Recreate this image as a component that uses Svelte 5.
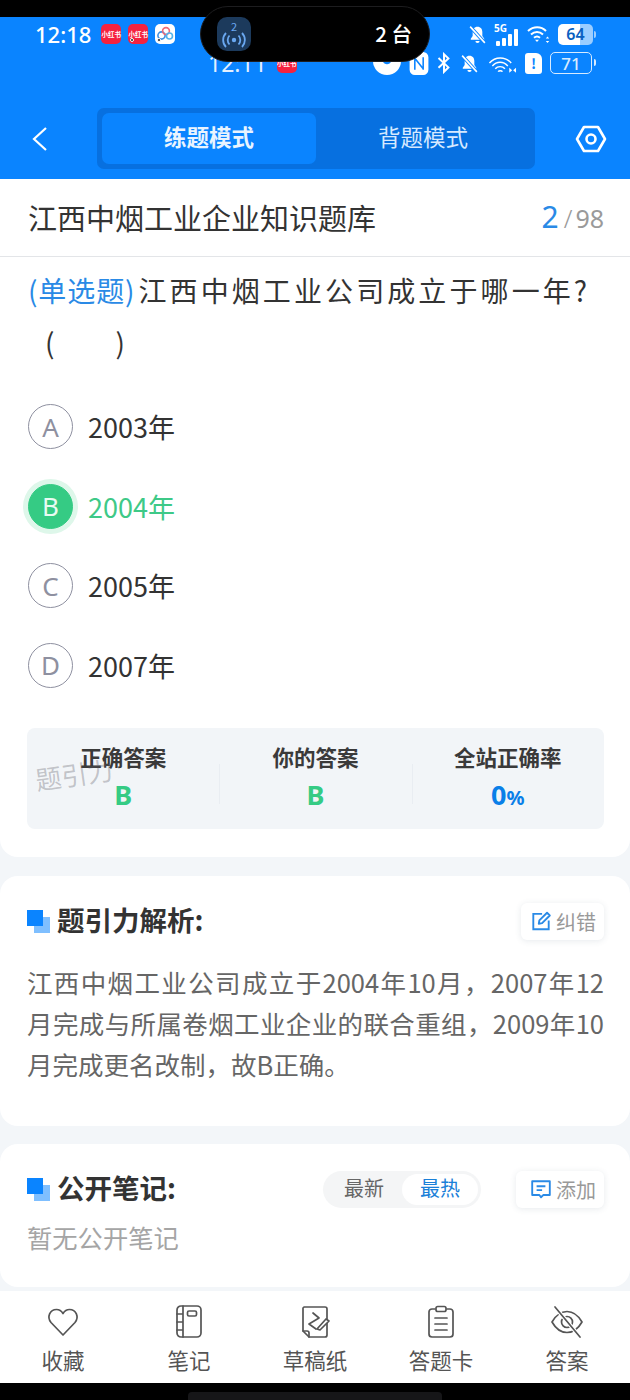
<script>
	const options = [
		{ key: 'A', text: '2003年' },
		{ key: 'B', text: '2004年', picked: true },
		{ key: 'C', text: '2005年' },
		{ key: 'D', text: '2007年' }
	];
	const tabs = ['收藏', '笔记', '草稿纸', '答题卡', '答案'];
</script>

<div class="phone">
	<div class="notch-strip"></div>

	<header class="top">
		<div class="status">
			<span class="clock">12:18</span>
			<span class="app-icon red">小红书</span>
			<span class="app-icon red">小红书<i class="dot"></i></span>
			<span class="app-icon pale">
				<svg viewBox="0 0 20 20" width="20" height="20" fill="none" stroke-width="1.6">
					<circle cx="6.5" cy="11.5" r="3.6" stroke="#3f8fe0" />
					<circle cx="11" cy="7" r="3.4" stroke="#ee6a78" />
					<circle cx="14.5" cy="12" r="3" stroke="#56b4ea" />
				</svg>
				<i class="dot"></i>
			</span>
			<span class="status-right">
				<svg viewBox="0 0 20 20" width="21" height="21" fill="#fff">
					<path d="M10 2.5c-3 0-4.6 2.2-4.6 5v4L3.600 14v1h12.800v-1l-1.800-2.500v-4c0-2.800-1.600-5-4.600-5zM8 16.200h4a2 2 0 0 1-4 0z" />
					<path d="M3 2.500 17 18" stroke="#0a84ff" stroke-width="3.400" />
					<path d="M3 2.500 17 18" stroke="#fff" stroke-width="1.500" />
				</svg>
				<span class="signal">
					<span class="five-g">5G</span>
					<span class="bars"><i style="height:5px"></i><i style="height:8px"></i><i style="height:12px"></i><i style="height:17px"></i></span>
				</span>
				<svg viewBox="0 0 26 20" width="26" height="20" fill="none" stroke="#fff" stroke-width="2">
					<path d="M2 7c5.500-5 13-5 18 0M5 10.500c3.500-3.200 8.500-3.200 12 0M8 13.800c2-1.700 4-1.700 6 0" />
					<path d="M11 18l-2-2.200h4z" fill="#fff" stroke="none" />
					<path d="M21.500 12.500l-1.700 2h3.400zM21.500 19l-1.700-2h3.400z" fill="#fff" stroke="none" />
				</svg>
				<span class="battery-filled"><b>64</b><i></i></span>
			</span>
		</div>

		<div class="status second">
			<span class="clock dim">12:11</span>
			<span class="app-icon red small">小红书</span>
			<span class="status-right lower">
				<span class="half-disc"></span>
				<svg viewBox="0 0 18 22" width="20" height="23" fill="none" stroke="#fff" stroke-width="2">
					<rect x="1" y="1" width="16" height="20" rx="4" fill="#fff" />
					<path d="M5 5v12M5 6l8 10M13 5v12" stroke="#0a84ff" stroke-width="1.500" />
				</svg>
				<svg viewBox="0 0 12 20" width="14" height="22" fill="none" stroke="#fff" stroke-width="1.800">
					<path d="M1 5.500l9 8.500-4 4V2l4 3.800-9 8.500" />
				</svg>
				<svg viewBox="0 0 20 20" width="21" height="21" fill="#fff">
					<path d="M10 2.500c-3 0-4.600 2.200-4.600 5v4L3.600 14v1h12.800v-1l-1.800-2.500v-4c0-2.800-1.600-5-4.600-5zM8 16.200h4a2 2 0 0 1-4 0z" />
					<path d="M3 2.500 17 18" stroke="#0a84ff" stroke-width="3.400" />
					<path d="M3 2.500 17 18" stroke="#fff" stroke-width="1.500" />
				</svg>
				<svg viewBox="0 0 30 20" width="29" height="20" fill="none" stroke="#fff" stroke-width="1.500">
					<path d="M1.500 10C7.500 3 18 3 24 10M4.500 13c4.500-5 11.500-5 16 0M7.500 16c2.500-3 7.500-3 10 0M10.500 19c1-1.400 3.500-1.400 4.500 0" />
					<path d="M22 15l3 2.500-3 2.500zM29 15l-3 2.500 3 2.500z" fill="#fff" stroke="none" />
				</svg>
				<span class="sim">!</span>
				<span class="battery-outline"><b>71</b></span>
			</span>
		</div>

		<nav class="mode-bar">
			<svg class="back" viewBox="0 0 18 28" width="18" height="28" fill="none" stroke="#fff" stroke-width="2.200">
				<path d="M15 3 3 14l12 11" />
			</svg>
			<div class="modes">
				<span class="mode active">练题模式</span>
				<span class="mode">背题模式</span>
			</div>
			<svg class="gear" viewBox="0 0 32 30" width="32" height="30" fill="none" stroke="#fff" stroke-width="2.600">
				<path d="M9 3h14l7 12-7 12H9L2 15z" stroke-linejoin="round" />
				<circle cx="16" cy="15" r="4.500" />
			</svg>
		</nav>
	</header>

	<!-- 投屏胶囊盖在状态栏上 -->
	<div class="island">
		<span class="cast">
			<small>2</small>
			<svg viewBox="0 0 26 16" width="26" height="16" fill="none" stroke="#6aa8f0" stroke-width="1.800">
				<circle cx="13" cy="8" r="2.200" fill="#6aa8f0" stroke="none" />
				<path d="M8.500 3.500a6.500 6.500 0 0 0 0 9M17.500 3.500a6.500 6.500 0 0 1 0 9M5 1a10 10 0 0 0 0 14M21 1a10 10 0 0 1 0 14" />
			</svg>
		</span>
		<span class="cast-count">2 台</span>
	</div>

	<main class="page">
		<section class="question-card">
			<div class="bank">
				<h1>江西中烟工业企业知识题库</h1>
				<span class="progress"><em>2</em><span class="slash">/</span>98</span>
			</div>

			<p class="stem"><span class="type">(单选题)</span>江西中烟工业公司成立于哪一年?<br /><span class="paren">(</span><span class="paren close">)</span></p>

			<ul class="options">
				{#each options as opt}
					<li class:picked={opt.picked}>
						<span class="letter">{opt.key}</span>
						<span>{opt.text}</span>
					</li>
				{/each}
			</ul>

			<div class="summary">
				<div class="cell">
					<h3>正确答案</h3>
					<strong class="green">B</strong>
				</div>
				<div class="cell">
					<h3>你的答案</h3>
					<strong class="green">B</strong>
				</div>
				<div class="cell">
					<h3>全站正确率</h3>
					<strong class="blue">0<small>%</small></strong>
				</div>
				<span class="watermark">题引力</span>
			</div>
		</section>

		<section class="card analysis">
			<div class="card-head">
				<span class="mark"></span>
				<h2>题引力解析:</h2>
				<span class="chip">
					<svg viewBox="0 0 20 20" width="22" height="22" fill="none" stroke="#2a8ae6" stroke-width="1.700">
						<path d="M11 3.500H3v14h14V9.500" />
						<path d="M8 12.500l.5-3L15.500 2.500l2.500 2.500-7 7z" stroke-linejoin="round" />
					</svg>
					纠错
				</span>
			</div>
			<p class="explain">江西中烟工业公司成立于2004年10月，2007年12月完成与所属卷烟工业企业的联合重组，2009年10月完成更名改制，故B正确。</p>
		</section>

		<section class="card notes">
			<div class="card-head">
				<span class="mark"></span>
				<h2>公开笔记:</h2>
				<span class="sort"><span>最新</span><span class="on">最热</span></span>
				<span class="chip wide">
					<svg viewBox="0 0 20 20" width="22" height="22" fill="none" stroke="#2a8ae6" stroke-width="1.700">
						<path d="M2 3h16v12.500h-6l-2 2-1.500-2H2z" stroke-linejoin="round" />
						<path d="M6 7.500h8M6 11h5" />
					</svg>
					添加
				</span>
			</div>
			<p class="empty">暂无公开笔记</p>
		</section>
	</main>

	<footer class="tabs">
		{#each tabs as tab, i}
			<div class="tab">
				<svg viewBox="0 0 36 36" width="36" height="36" fill="none" stroke="#555" stroke-width="1.700" stroke-linejoin="round" stroke-linecap="round">
					{#if i === 0}
						<path d="M18 31 6 18.500C1.500 13 5 5.500 11.500 5.500c3 0 5 1.500 6.500 4 1.500-2.500 3.500-4 6.500-4C31 5.500 34.500 13 30 18.500z" />
					{:else if i === 1}
						<rect x="6" y="2" width="24" height="31" rx="4" />
						<path d="M12 2v31M6 10h6M6 18h6M6 26h6" />
						<rect x="16.500" y="7" width="9" height="5" rx="1.500" />
					{:else if i === 2}
						<path d="M7 3h21a2 2 0 0 1 2 2v26a2 2 0 0 1-2 2H12l-6-6V4z" />
						<path d="M6 27h4a2 2 0 0 1 2 2v4" />
						<path d="M16 9l6 5-10 6 7 5" />
						<path d="M20 25l9-10 3 2-9 9z" fill="#fff" />
					{:else if i === 3}
						<path d="M12 5H9a3 3 0 0 0-3 3v22a3 3 0 0 0 3 3h18a3 3 0 0 0 3-3V8a3 3 0 0 0-3-3h-3" />
						<rect x="13" y="2.500" width="10" height="5" rx="1.800" />
						<path d="M12 14h12M12 20h12M12 26h12" />
					{:else}
						<path d="M3 18c4-7 9-10.500 15-10.500S29 11 33 18c-4 7-9 10.500-15 10.500S7 25 3 18z" />
						<circle cx="18" cy="18" r="5.500" />
						<path d="M6 3l25 30" stroke="#fff" stroke-width="4" />
						<path d="M6 3l25 30" />
					{/if}
				</svg>
				<span>{tab}</span>
			</div>
		{/each}
	</footer>

	<div class="nav-strip"><span class="home-bar"></span></div>
</div>

<style>
	:global(body) {
		margin: 0;
		background: #f3f6f9;
	}

	.phone {
		position: relative;
		width: 630px;
		height: 1400px;
		display: flex;
		flex-direction: column;
		overflow: hidden;
		font-family: "Noto Sans CJK SC", "Noto Sans", sans-serif;
		color: #333;
	}

	.notch-strip {
		height: 17px;
		background: #000;
	}

	.top {
		height: 162px;
		background: #0a84ff;
		color: #fff;
		display: flex;
		flex-direction: column;
	}

	.status {
		display: flex;
		align-items: center;
		height: 34px;
		padding: 0 35px;
		gap: 7px;
	}

	.clock {
		font-family: "Noto Sans", sans-serif;
		font-size: 22px;
		font-weight: 500;
		margin-right: 3px;
		line-height: 1;
	}

	.app-icon {
		position: relative;
		width: 20px;
		height: 20px;
		border-radius: 5px;
		display: flex;
		align-items: center;
		justify-content: center;
		font-size: 6.500px;
		font-weight: 700;
		color: #fff;
		white-space: nowrap;
	}

	.dot {
		position: absolute;
		left: 2px;
		bottom: 2px;
		width: 4px;
		height: 4px;
		border-radius: 50%;
		background: #111;
		border: 1px solid #fff;
		box-sizing: border-box;
	}

	.red {
		background: #f5223f;
	}

	.pale {
		background: #fff;
	}

	.status-right {
		margin-left: auto;
		display: flex;
		align-items: center;
		gap: 6px;
	}

	.signal {
		position: relative;
		width: 26px;
		height: 23px;
	}

	.five-g {
		position: absolute;
		left: 0;
		top: 0;
		font-family: "Noto Sans", sans-serif;
		font-size: 10px;
		font-weight: 700;
		line-height: 1;
	}

	.bars {
		position: absolute;
		left: 2px;
		bottom: 0;
		display: flex;
		align-items: flex-end;
		gap: 2px;
	}

	.bars i {
		width: 4px;
		background: #fff;
		border-radius: 1px;
	}

	.battery-filled {
		position: relative;
		width: 35px;
		height: 21px;
		border-radius: 5px;
		background: linear-gradient(90deg, #fff 62%, #9bcdff 62%);
		display: flex;
		align-items: center;
		justify-content: center;
		margin-right: 2px;
	}

	.battery-filled b {
		font-family: "Noto Sans", sans-serif;
		font-size: 16px;
		font-weight: 600;
		color: #0a5fc0;
		line-height: 1;
	}

	.battery-filled i {
		position: absolute;
		right: -3px;
		top: 7px;
		width: 2px;
		height: 7px;
		border-radius: 0 2px 2px 0;
		background: #9bcdff;
	}

	.second {
		height: 24px;
		padding: 0 38px 0 208px;
		gap: 7px;
	}

	.dim {
		font-size: 23px;
		font-weight: 400;
		color: #e3f0ff;
	}

	.lower {
		gap: 8px;
	}

	.half-disc {
		width: 28px;
		height: 17px;
		margin-top: 7px;
		border-radius: 0 0 14px 14px;
		background: radial-gradient(circle at 50% 10%, #0a84ff 4px, #fff 5px);
	}

	.sim {
		width: 17px;
		height: 21px;
		border-radius: 3px 6px 3px 3px;
		background: #fff;
		color: #0a84ff;
		font-size: 14px;
		font-weight: 700;
		line-height: 21px;
		text-align: center;
	}

	.battery-outline {
		position: relative;
		width: 40px;
		height: 20px;
		border: 1.500px solid #d8ebff;
		border-radius: 5px;
		display: flex;
		align-items: center;
		justify-content: center;
	}

	.battery-outline::after {
		content: "";
		position: absolute;
		right: -5px;
		top: 6px;
		width: 2px;
		height: 7px;
		background: #d8ebff;
		border-radius: 0 2px 2px 0;
	}

	.battery-outline b {
		font-family: "Noto Sans", sans-serif;
		font-size: 17px;
		font-weight: 500;
		color: #d8ebff;
		line-height: 1;
	}

	.mode-bar {
		display: flex;
		align-items: center;
		margin-top: 33px;
		padding: 0 23px 0 31px;
	}

	.back {
		flex: none;
	}

	.modes {
		display: flex;
		width: 438px;
		height: 61px;
		margin-left: 48px;
		box-sizing: border-box;
		padding: 5px;
		border-radius: 7px;
		background: #0770e0;
	}

	.mode {
		flex: 1;
		display: flex;
		align-items: center;
		justify-content: center;
		padding-bottom: 5px;
		font-size: 22.500px;
		color: #d6e9ff;
		border-radius: 7px;
	}

	.mode.active {
		background: #0a84ff;
		color: #e9f4ff;
		font-weight: 700;
	}

	.gear {
		flex: none;
		margin-left: auto;
	}

	.island {
		position: absolute;
		left: 200px;
		top: 6px;
		width: 230px;
		height: 56px;
		box-sizing: border-box;
		padding: 0 17px 0 16px;
		border-radius: 28px;
		background: #000;
		border: 1px solid #1d1d1f;
		display: flex;
		align-items: center;
		justify-content: space-between;
	}

	.cast {
		width: 34px;
		height: 34px;
		border-radius: 10px;
		background: #1c3a5c;
		display: flex;
		flex-direction: column;
		align-items: center;
		justify-content: center;
	}

	.cast small {
		font-size: 11px;
		color: #6aa8f0;
		line-height: 11px;
	}

	.cast-count {
		color: #fff;
		font-size: 20.500px;
		font-weight: 500;
		padding-bottom: 3px;
	}

	.page {
		flex: 1;
		display: flex;
		flex-direction: column;
		gap: 19px;
		min-height: 0;
	}

	.question-card {
		height: 678px;
		background: #fff;
		border-radius: 0 0 18px 18px;
	}

	.bank {
		height: 78px;
		box-sizing: border-box;
		border-bottom: 1px solid #e3e5e8;
		padding: 0 26px 2px 28px;
		display: flex;
		align-items: center;
		justify-content: space-between;
	}

	.bank h1 {
		margin: 0;
		font-size: 29px;
		font-weight: 400;
		color: #333;
	}

	.progress {
		font-family: "Noto Sans", sans-serif;
		font-size: 25px;
		color: #9a9a9a;
		display: flex;
		align-items: baseline;
	}

	.progress em {
		font-style: normal;
		font-size: 30px;
		color: #2a8ae6;
	}

	.slash {
		margin: 0 3px 0 5px;
		font-weight: 300;
	}

	.stem {
		margin: 7px 0 0;
		padding: 0 28px;
		font-size: 28px;
		line-height: 52px;
		letter-spacing: 3.100px;
		color: #333;
	}

	.type {
		color: #2a8ae6;
		letter-spacing: 0.900px;
		margin-right: 3px;
	}

	.paren {
		margin-left: 17px;
	}

	.paren.close {
		margin-left: 58px;
	}

	.options {
		list-style: none;
		margin: 19px 0 0;
		padding: 0 28px;
	}

	.options li {
		height: 79.500px;
		display: flex;
		align-items: center;
		gap: 15px;
		font-size: 27px;
		color: #333;
	}

	.letter {
		box-sizing: border-box;
		width: 45px;
		height: 45px;
		border-radius: 50%;
		border: 1.500px solid #8e90a0;
		color: #8e90a0;
		display: flex;
		align-items: center;
		justify-content: center;
		font-family: "Noto Sans", sans-serif;
		font-size: 26px;
	}

	.options li.picked {
		color: #3ec987;
	}

	.picked .letter {
		background: #35cb84;
		border-color: #35cb84;
		color: #e8fbf2;
		box-shadow: 0 0 0 5px #def7ea;
	}

	.summary {
		position: relative;
		margin: 23px 26px 0 27px;
		height: 101px;
		border-radius: 8px;
		background: #f2f5f8;
		display: grid;
		grid-template-columns: repeat(3, 1fr);
	}

	.cell {
		position: relative;
		display: flex;
		flex-direction: column;
		align-items: center;
		padding-top: 14px;
	}

	.cell + .cell::before {
		content: "";
		position: absolute;
		left: 0;
		top: 36px;
		height: 40px;
		width: 1px;
		background: #e9edf2;
	}

	.cell h3 {
		margin: 0;
		font-size: 21.500px;
		line-height: 30px;
		font-weight: 700;
		color: #3a3a3a;
	}

	.cell strong {
		font-family: "Noto Sans", sans-serif;
		font-size: 27px;
		line-height: 45px;
		font-weight: 700;
	}

	.cell small {
		font-size: 20px;
	}

	.green {
		color: #35cb84;
	}

	.blue {
		color: #0a7fe8;
	}

	.watermark {
		position: absolute;
		left: 8px;
		top: 27px;
		font-size: 26px;
		color: rgba(90, 90, 100, 0.32);
		transform: rotate(-8deg);
		white-space: nowrap;
	}

	.card {
		background: #fff;
		border-radius: 18px;
		padding: 0 26px 0 27px;
	}

	.analysis {
		height: 250px;
	}

	.notes {
		height: 143px;
		margin-top: -1px;
	}

	.card-head {
		display: flex;
		align-items: center;
		height: 36px;
		padding-top: 27px;
	}

	.mark {
		position: relative;
		flex: none;
		width: 23px;
		height: 23px;
		margin-right: 7px;
	}

	.mark::before,
	.mark::after {
		content: "";
		position: absolute;
		width: 16px;
		height: 16px;
	}

	.mark::after {
		left: 0;
		top: 0;
		background: #0a84ff;
	}

	.mark::before {
		left: 7px;
		top: 7px;
		background: #7fbfff;
	}

	.card-head h2 {
		margin: 0 0 4px;
		font-size: 27.500px;
		font-weight: 700;
		color: #333;
	}

	.chip {
		margin-left: auto;
		height: 37px;
		box-sizing: border-box;
		padding: 0 8px 0 9px;
		display: flex;
		align-items: center;
		gap: 4px;
		border-radius: 6px;
		background: #fff;
		box-shadow: 0 1px 6px rgba(60, 80, 110, 0.12);
		font-size: 20px;
		color: #999;
	}

	.explain {
		margin: 22px 0 0;
		font-size: 25.500px;
		line-height: 41px;
		color: #666;
		text-align: justify;
	}

	.sort {
		margin-left: auto;
		display: flex;
		align-items: center;
		height: 37px;
		box-sizing: border-box;
		padding: 3px;
		border-radius: 19px;
		background: #f4f5f6;
		font-size: 20px;
		color: #666;
	}

	.sort span {
		padding: 0 18px 3px;
		line-height: 28px;
		border-radius: 16px;
	}

	.sort .on {
		background: #fff;
		color: #1a80d8;
	}

	.chip.wide {
		margin-left: 35px;
		padding: 0 8px 0 14px;
	}

	.empty {
		margin: 12px 0 0;
		font-size: 25.300px;
		line-height: 36px;
		color: #a5a5a5;
	}

	.tabs {
		height: 92px;
		flex: none;
		background: #fff;
		display: grid;
		grid-template-columns: repeat(5, 1fr);
	}

	.tab {
		display: flex;
		flex-direction: column;
		align-items: center;
		padding-top: 13px;
		gap: 5px;
		font-size: 21.500px;
		color: #555;
	}

	.tab span {
		line-height: 30px;
	}

	.nav-strip {
		height: 17px;
		flex: none;
		background: #000;
		display: flex;
		justify-content: center;
		align-items: flex-end;
	}

	.home-bar {
		width: 254px;
		height: 8px;
		border-radius: 4px 4px 0 0;
		background: #161618;
	}
</style>
